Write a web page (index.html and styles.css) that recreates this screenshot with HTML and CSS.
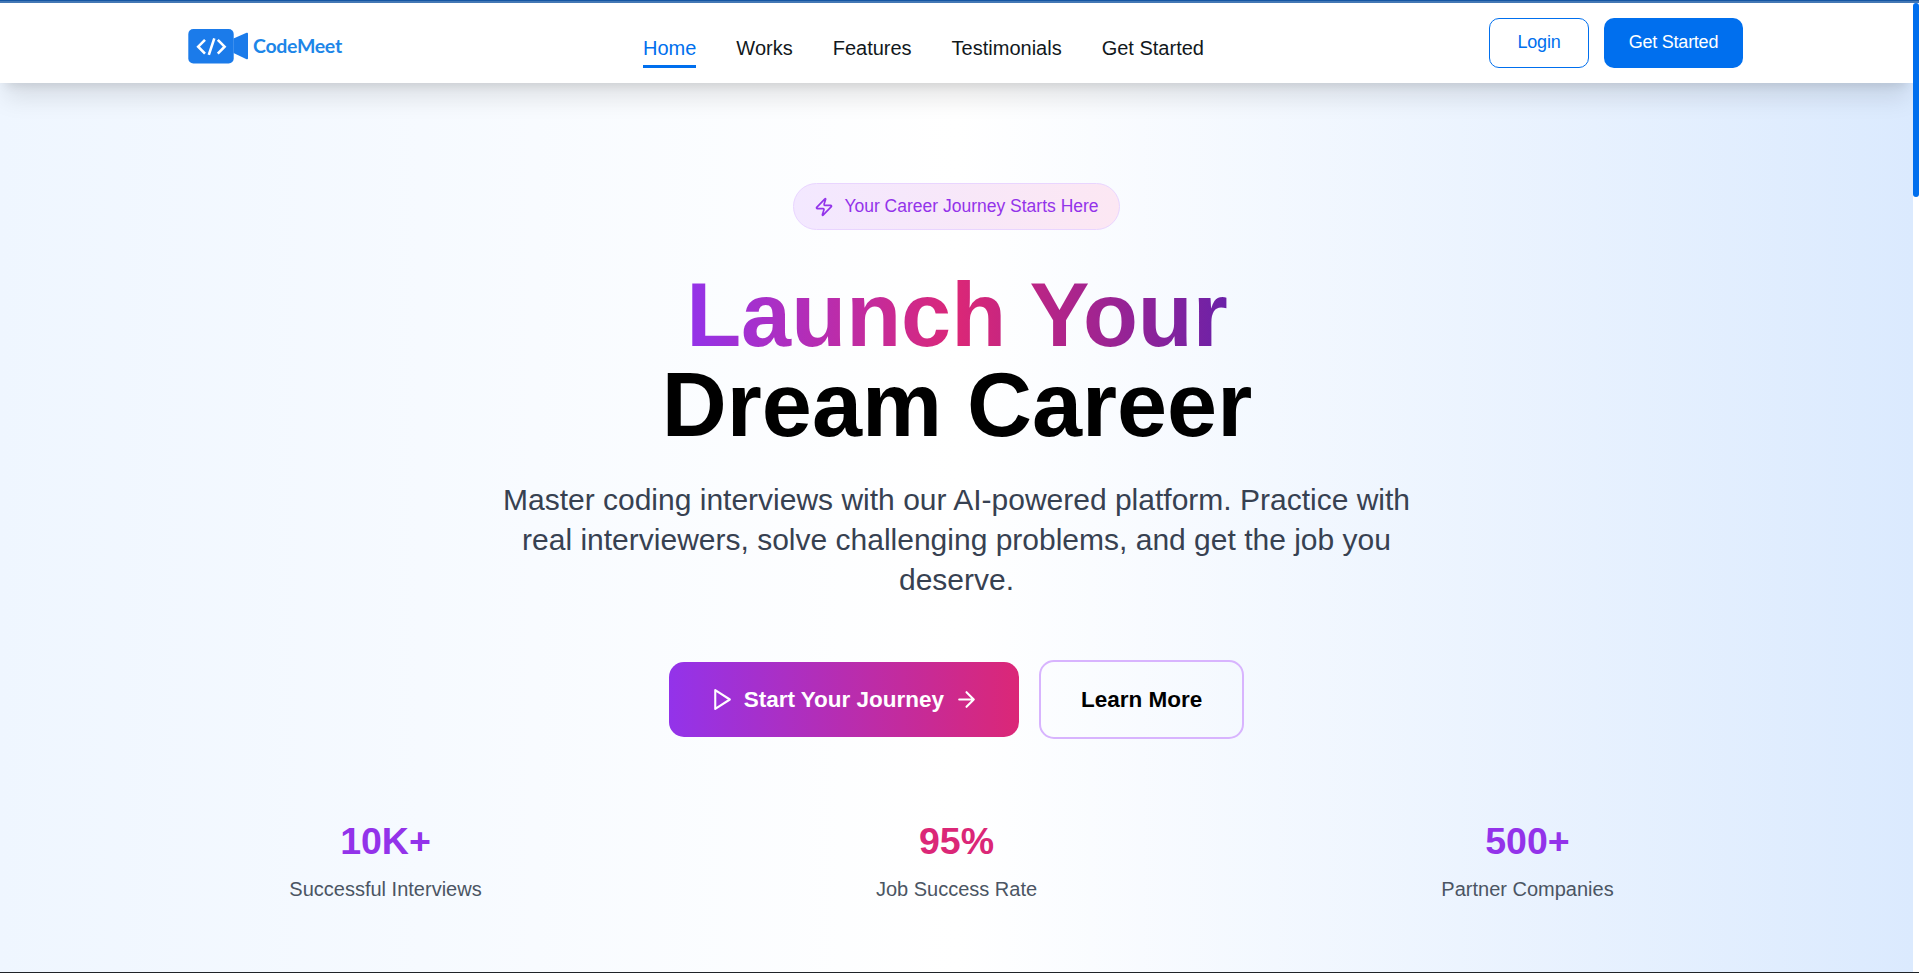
FILE: index.html
```html
<!DOCTYPE html>
<html lang="en">
<head>
<meta charset="utf-8">
<title>CodeMeet</title>
<link rel="stylesheet" href="styles.css">
</head>
<body>
<div class="top-line"></div>
<div class="viewport">
  <div class="page">
    <header class="header">
      <a class="logo">
        <svg class="logo-mark" viewBox="0 0 62 36" width="62" height="36">
          <rect x="0.3" y="1" width="45.4" height="34.4" rx="5" fill="#1b7bea"/>
          <path d="M45.5 10.5 L58.6 4.8 Q60 4.3 60 5.8 V30.2 Q60 31.7 58.6 31.2 L45.5 25 Z" fill="#1b7bea"/>
          <path d="M17 11.8 L10.2 18.7 L17 25.6 M29.8 11.8 L36.6 18.7 L29.8 25.6 M26.3 10.3 L20.8 26.8" fill="none" stroke="#fff" stroke-width="2.6"/>
        </svg>
        <span class="logo-text">CodeMeet</span>
      </a>
      <nav class="nav">
        <a class="nav-link active">Home</a>
        <a class="nav-link">Works</a>
        <a class="nav-link">Features</a>
        <a class="nav-link">Testimonials</a>
        <a class="nav-link">Get Started</a>
      </nav>
      <div class="actions">
        <a class="btn btn-login">Login</a>
        <a class="btn btn-start">Get Started</a>
      </div>
    </header>
    <main class="hero">
      <div class="badge">
        <svg class="icon" viewBox="0 0 24 24" width="20" height="20"><path d="M4 14a1 1 0 0 1-.78-1.63l9.9-10.2a.5.5 0 0 1 .86.46l-1.92 6.02A1 1 0 0 0 13 10h7a1 1 0 0 1 .78 1.63l-9.9 10.2a.5.5 0 0 1-.86-.46l1.92-6.02A1 1 0 0 0 11 14z"/></svg>
        <span class="badge-text">Your Career Journey Starts Here</span>
      </div>
      <h1 class="title"><span class="title-accent">Launch Your</span><br>Dream Career</h1>
      <p class="lead">Master coding interviews with our AI-powered platform. Practice with real interviewers, solve challenging problems, and get the job you deserve.</p>
      <div class="cta">
        <a class="cta-primary">
          <svg class="icon" viewBox="0 0 24 24" width="25" height="25"><path d="M6 3l14 9-14 9z"/></svg>
          <span>Start Your Journey</span>
          <svg class="icon" viewBox="0 0 24 24" width="25" height="25"><path d="M5 12h14M12 5l7 7-7 7"/></svg>
        </a>
        <a class="cta-secondary">Learn More</a>
      </div>
      <div class="stats">
        <div class="stat"><div class="stat-value">10K+</div><div class="stat-label">Successful Interviews</div></div>
        <div class="stat"><div class="stat-value pink">95%</div><div class="stat-label">Job Success Rate</div></div>
        <div class="stat"><div class="stat-value">500+</div><div class="stat-label">Partner Companies</div></div>
      </div>
    </main>
  </div>
  <div class="scroll-track"><div class="scroll-thumb"></div></div>
</div>
<div class="bottom-line"></div>
</body>
</html>
```
FILE: styles.css
```css
* { box-sizing: border-box; }
body {
  margin: 0;
  height: 973px;
  overflow: hidden;
  display: flex;
  flex-direction: column;
  font-family: "Liberation Sans", Arial, sans-serif;
  font-size: 20px;
  line-height: 30px;
  color: #000;
}
.top-line { height: 3px; background: #4478b5; border-top: 1px solid #1556a3; flex: none; }
.bottom-line { height: 1px; background: #1f2328; flex: none; }
.viewport { flex: 1; display: flex; min-height: 0; }
.page { flex: 1; display: flex; flex-direction: column; background: linear-gradient(to right, #eff6ff, #fff 50%, #dbeafe); overflow: hidden; }
.scroll-track { width: 6px; background: #fff; }
.scroll-thumb { height: 194px; background: #006fee; border-radius: 3px; }

.header {
  height: 80px;
  flex: none;
  padding: 0 170px 0 188px;
  display: grid;
  grid-template-columns: 455px 1fr auto;
  align-items: center;
  background: #fff;
  box-shadow: 0 20px 25px -5px rgba(0,0,0,.1), 0 8px 10px -6px rgba(0,0,0,.1);
}
.logo { display: flex; align-items: center; gap: 3px; padding-top: 6px; }
.logo-text { font-family: Lato, sans-serif; font-weight: 700; font-size: 19.5px; letter-spacing: -0.3px; color: #1d86e8; }
.nav { display: flex; gap: 40px; padding-top: 12px; }
.nav-link { color: #11181c; padding: 3px 0 2px; border-bottom: 3px solid transparent; }
.nav-link.active { color: #006fee; border-color: #006fee; }
.actions { display: flex; gap: 15px; }
.btn { height: 50px; border-radius: 10px; font-size: 18px; line-height: 48px; text-align: center; letter-spacing: -0.25px; }
.btn-login { width: 100px; border: 1px solid #006fee; color: #006fee; line-height: 46px; }
.btn-start { width: 139px; background: #006fee; color: #fff; }

.hero { display: flex; flex-direction: column; align-items: center; padding: 100px 100px 0; text-align: center; }
.icon { fill: none; stroke: currentColor; stroke-width: 2; stroke-linecap: round; stroke-linejoin: round; flex: none; }
.badge {
  height: 47px;
  padding: 0 20px;
  display: flex;
  align-items: center;
  gap: 10px;
  border: 1px solid #e9d5ff;
  border-radius: 24px;
  background: linear-gradient(to right, #f3e8ff, #fce7f3);
  color: #9333ea;
  font-size: 17.5px;
}
.badge-text { padding-bottom: 2px; }
.title { margin: 40px 0 30px; padding-left: 1px; font-size: 90px; line-height: 90px; font-weight: 700; }
.title-accent { background: linear-gradient(to right, #9333ea, #db2777, #6b21a8); -webkit-background-clip: text; background-clip: text; color: transparent; }
.lead { width: 960px; margin: 0 0 60px; font-size: 30px; line-height: 40px; color: #374151; }
.cta { display: flex; align-items: center; gap: 20px; font-size: 22.5px; font-weight: 700; line-height: 35px; }
.cta-primary { height: 75px; padding: 0 40px; display: flex; align-items: center; gap: 10px; border-radius: 15px; color: #fff; background: linear-gradient(to right, #9333ea, #db2777); }
.cta-secondary { height: 79px; padding: 20px 40px; border: 2px solid #d8b4fe; border-radius: 15px; }
.stats { width: 1673px; margin-top: 80px; display: grid; grid-template-columns: repeat(3, 1fr); gap: 40px; }
.stat-value { font-size: 37.5px; line-height: 45px; font-weight: 700; color: #9333ea; }
.stat-value.pink { color: #db2777; }
.stat-label { margin-top: 10px; color: #4b5563; }
```
